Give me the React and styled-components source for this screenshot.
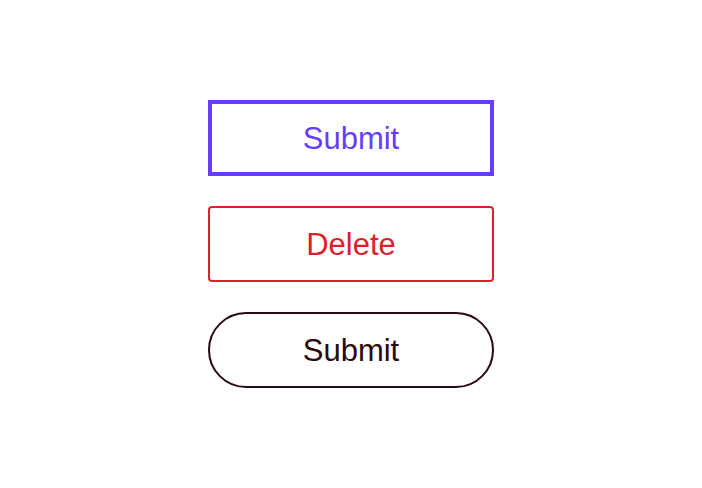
import React from "react";
import styled, { createGlobalStyle, css } from "styled-components";

const Global = createGlobalStyle`
  html, body { margin: 0; padding: 0; background: #fff; }
  body { font-family: "Liberation Sans", Arial, sans-serif; }
`;

const Page = styled.div`
  min-height: 100vh;
  display: flex;
  flex-direction: column;
  align-items: center;
  justify-content: center;
  gap: 30px;
`;

const variants = {
  primary: css`
    border: 4px solid #663dff;
    color: #663dff;
    border-radius: 0;
  `,
  danger: css`
    border: 2px solid #dc1f2b;
    color: #dc1f2b;
    border-radius: 4px;
  `,
  pill: css`
    border: 2px solid #2a0a10;
    color: #2a0a10;
    border-radius: 38px;
  `,
};

const Button = styled.button`
  box-sizing: border-box;
  width: 286px;
  height: 76px;
  background: #fff;
  font-family: "Liberation Sans", Arial, sans-serif;
  font-size: 31px;
  display: flex;
  align-items: center;
  justify-content: center;
  padding: 2px 0 0;
  cursor: pointer;
  ${(p) => variants[p.$variant]}
`;

export default function App() {
  return (
    <>
      <Global />
      <Page>
        <Button $variant="primary">Submit</Button>
        <Button $variant="danger">Delete</Button>
        <Button $variant="pill">Submit</Button>
      </Page>
    </>
  );
}
